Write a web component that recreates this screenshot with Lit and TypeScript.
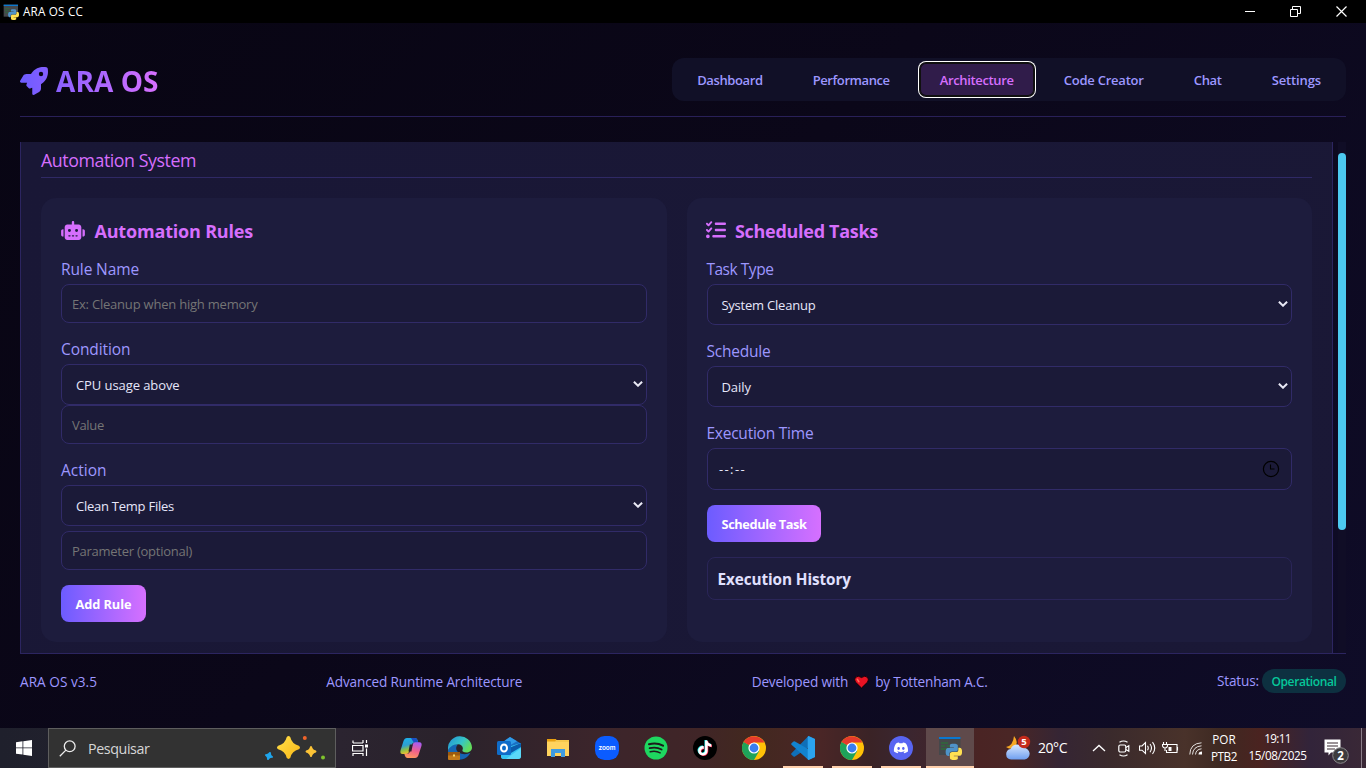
import { LitElement, html, css, svg, nothing } from "lit";
import { customElement, property, state } from "lit/decorators.js";
import { styleMap } from "lit/directives/style-map.js";

/** One line of text whose tracking is adjusted so that it fills `w` pixels. */
@customElement("fit-text")
class FitText extends LitElement {
  static styles = css`
    :host { display: inline-block; white-space: pre; }
  `;
  @property() text = "";
  @property({ type: Number }) w = 0;
  @state() spacing = 0;
  firstUpdated() {
    const el = this.renderRoot.querySelector("span")!;
    const natural = el.getBoundingClientRect().width;
    if (this.w && this.text.length > 1) this.spacing = (this.w - natural) / this.text.length;
  }
  render() {
    return html`<span style=${styleMap({ letterSpacing: this.spacing + "px" })}>${this.text}</span>`;
  }
}

const t = (text: string, w: number) => html`<fit-text .text=${text} .w=${w}></fit-text>`;

const rocket = html`<svg class="rocket" viewBox="0 0 512 512" width="28" height="28">
  <defs><linearGradient id="rg" x1="0" x2="1"><stop offset="0" stop-color="#6c5cff" /><stop offset="1" stop-color="#855eff" /></linearGradient></defs>
  <path fill="url(#rg)" d="M156.6 384.9L125.7 354c-8.5-8.5-11.5-20.8-7.7-32.2c3-8.9 7-20.5 11.8-33.8L24 288c-8.6 0-16.6-4.6-20.9-12.1s-4.2-16.7 .2-24.1l52.5-88.5c13-21.9 36.5-35.3 61.9-35.3l82.3 0c2.4-4 4.8-7.7 7.2-11.3C289.1-4.1 411.1-8.1 483.9 5.3c11.6 2.1 20.6 11.2 22.8 22.8c13.4 72.9 9.3 194.8-111.4 276.7c-3.5 2.4-7.3 4.8-11.3 7.2v82.3c0 25.4-13.4 49-35.3 61.9l-88.5 52.5c-7.4 4.4-16.6 4.5-24.1 .2s-12.1-12.2-12.1-20.9V380.8c-14.1 4.9-26.4 8.9-35.7 11.9c-11.2 3.6-23.4 .5-31.8-7.8zM384 168a40 40 0 1 0 0-80 40 40 0 1 0 0 80z" />
</svg>`;

const robot = html`<svg class="robot" viewBox="0 0 640 512" width="24" height="19"><path fill="#d66efd" d="M320 0c17.700 0 32 14.300 32 32V96H472c39.800 0 72 32.200 72 72V440c0 39.800-32.200 72-72 72H168c-39.800 0-72-32.200-72-72V168c0-39.800 32.200-72 72-72H288V32c0-17.700 14.300-32 32-32zM208 384c-8.800 0-16 7.200-16 16s7.200 16 16 16h32c8.800 0 16-7.200 16-16s-7.200-16-16-16H208zm96 0c-8.800 0-16 7.200-16 16s7.200 16 16 16h32c8.800 0 16-7.200 16-16s-7.200-16-16-16H304zm96 0c-8.800 0-16 7.200-16 16s7.200 16 16 16h32c8.800 0 16-7.200 16-16s-7.200-16-16-16H400zM264 256a40 40 0 1 0 -80 0 40 40 0 1 0 80 0zm152 40a40 40 0 1 0 0-80 40 40 0 1 0 0 80zM48 224H64V416H48c-26.500 0-48-21.500-48-48V272c0-26.500 21.500-48 48-48zm544 0c26.500 0 48 21.500 48 48v96c0 26.500-21.500 48-48 48H576V224h16z" /></svg>`;

const listCheck = html`<svg class="check" viewBox="0 0 512 512" width="20" height="20"><path fill="#d66efd" d="M152.1 38.2c9.9 8.9 10.7 24 1.8 33.9l-72 80c-4.4 4.9-10.6 7.8-17.2 7.9s-12.9-2.4-17.6-7L7 113C-2.3 103.6-2.3 88.4 7 79s24.6-9.4 33.9 0l22.1 22.1 55.1-61.2c8.9-9.900 24-10.700 33.900-1.800zm0 160c9.900 8.900 10.700 24 1.800 33.900l-72 80c-4.400 4.900-10.600 7.800-17.200 7.900s-12.900-2.400-17.600-7L7 273c-9.400-9.400-9.400-24.600 0-33.900s24.600-9.400 33.900 0l22.100 22.100 55.100-61.200c8.900-9.900 24-10.700 33.900-1.800zM224 96c0-17.700 14.300-32 32-32H480c17.700 0 32 14.300 32 32s-14.300 32-32 32H256c-17.700 0-32-14.300-32-32zm0 160c0-17.700 14.300-32 32-32H480c17.700 0 32 14.300 32 32s-14.300 32-32 32H256c-17.700 0-32-14.300-32-32zM160 416c0-17.700 14.300-32 32-32H480c17.700 0 32 14.300 32 32s-14.300 32-32 32H192c-17.700 0-32-14.300-32-32zM48 368a48 48 0 1 1 0 96 48 48 0 1 1 0-96z" /></svg>`;

const PY = "M14.25.18l.9.2.73.26.59.3.45.32.34.34.25.34.16.33.1.3.04.26.02.2-.01.13V8.5l-.05.63-.13.55-.21.46-.26.38-.3.31-.33.25-.35.19-.35.14-.33.1-.3.07-.26.04-.21.02H8.77l-.69.05-.59.14-.5.22-.41.27-.33.32-.27.35-.2.36-.15.37-.1.35-.07.32-.04.27-.02.21v3.06H3.17l-.21-.03-.28-.07-.32-.12-.35-.18-.36-.26-.36-.36-.35-.46-.32-.59-.28-.73-.21-.88-.14-1.05-.05-1.23.06-1.22.16-1.04.24-.87.32-.71.36-.57.4-.44.42-.33.42-.24.4-.16.36-.1.32-.05.24-.01h.16l.06.01h8.16v-.83H6.18l-.01-2.75-.02-.37.05-.34.11-.31.17-.28.25-.26.31-.23.38-.2.44-.18.51-.15.58-.12.64-.1.71-.06.77-.04.84-.02 1.27.05z";

const pythonWindow = (s: number) => html`<svg viewBox="0 0 24 24" width=${s} height=${s}>
  <rect x="1" y="1" width="21.500" height="18" fill="#45484b" /><rect x="1" y="1" width="21.500" height="2" fill="#0a78d0" />
  <path d="M3 7h7M3 10h4M8.500 10h4M3 13h6" stroke="#2f6a3c" stroke-width="1.300" />
  <g transform="translate(7.700 7.700) scale(.68)"><path d=${PY} fill="#4f93c8" /><path d=${PY} fill="#ffe052" transform="rotate(180 12 12)" /></g>
</svg>`;

const chrome = html`<svg viewBox="0 0 24 24" width="24" height="24">
  <circle cx="12" cy="12" r="12" fill="#ffc107" />
  <path d="M12 12L1.600 6A12 12 0 0 0 12 24L17.200 15z" fill="#1ea35a" />
  <path d="M1.600 6L6.800 15L12 12z" fill="#1ea35a" />
  <path d="M1.600 6A12 12 0 0 1 22.400 6.500H12L6.800 9z" fill="#e53b2c" />
  <circle cx="12" cy="12" r="5.600" fill="#fff" /><circle cx="12" cy="12" r="4.400" fill="#3a7df0" />
</svg>`;

const copilot = html`<svg viewBox="0 0 24 24" width="24" height="24">
  <defs>
    <linearGradient id="ca" x1="0" y1="0" x2=".3" y2="1"><stop offset="0" stop-color="#19b4f0" /><stop offset=".5" stop-color="#2f9fd0" /><stop offset=".75" stop-color="#8bc04a" /><stop offset="1" stop-color="#f2c22b" /></linearGradient>
    <linearGradient id="cb" x1=".6" y1="0" x2=".3" y2="1"><stop offset="0" stop-color="#a95cf0" /><stop offset=".5" stop-color="#f0608c" /><stop offset="1" stop-color="#ff9a5c" /></linearGradient>
  </defs>
  <path d="M8 2h8q1.800 0 2.500 2l.8 2.500h-4q-1.800 0-2.400 2L10 16q-.8 2-2.600 2H3.500Q.8 18 1.500 14.500L4.500 5Q5.500 2 8 2z" fill="url(#ca)" />
  <path d="M12 2h4q1.800 0 2.500 2l.8 2.500h-4.600z" fill="#1a4fc4" />
  <path d="M16 22H8.500q-1.800 0-2.500-2l-.7-2.200h3.200q1.800 0 2.400-2l2.800-7.600q.8-2 2.600-2h4.200q2.700 0 2 3.500L19.500 19Q18.500 22 16 22z" fill="url(#cb)" />
  <path d="M10.800 8.500h3L12.400 15.500H9.500z" fill="#2a232c" />
</svg>`;

const edge = html`<svg viewBox="0 0 24 24" width="24" height="24">
  <defs><linearGradient id="ea" x1="0" x2="1" y2=".5"><stop offset="0" stop-color="#2392d8" /><stop offset=".6" stop-color="#35c4c8" /><stop offset="1" stop-color="#62dc5c" /></linearGradient></defs>
  <path d="M0 16C0 10 5 7.500 10 8.500c-2.500 2-2.500 6 .5 8 4 2.300 8.500 2 12 .2-3 5.500-9 8-14.500 6.500C3 22 0 19 0 16z" fill="#1565b4" />
  <path d="M0 13A12 12 0 0 1 24 11.500c0 3.500-3 5-5.500 5-3.500 0-4.500-1.500-4-2.500 1.300-3-1-5.800-4.500-5.800C5 8.200 1 11 0 15z" fill="url(#ea)" />
  <rect y="16" width="12" height="8" rx="1" fill="#c47a1a" /><path d="M0 16h12v3.500H0z" fill="#9c5a10" /><rect x="5" y="18.500" width="2" height="2" fill="#ffd75e" />
</svg>`;

const outlook = html`<svg viewBox="0 0 24 24" width="24" height="24">
  <path d="M4 7L13 1l10 6v8H4z" fill="#1a6fc4" /><path d="M8 4.500L13 1l7 4.200-7 4z" fill="#2f9be8" />
  <path d="M4 22V13l20-6v13q0 3-3 3H7q-3 0-3-2z" fill="#35c3f2" /><path d="M12 12l12-5v4l-10 6z" fill="#0b5bab" /><path d="M9 23l15-11v8q0 3-3 3z" fill="#5ad8f8" />
  <rect y="5" width="14" height="14" rx="1.500" fill="#0f6cc9" /><ellipse cx="7" cy="12" rx="3" ry="3.500" fill="none" stroke="#fff" stroke-width="2" />
</svg>`;

const folder = html`<svg viewBox="0 0 24 24" width="24" height="24">
  <path d="M1 3h9l1 2v3H1z" fill="#e8a010" /><path d="M1 5.500h22V20H1z" fill="#ffd35e" /><path d="M10 4h13v2H9z" fill="#f7c84c" />
  <path d="M5 13h14v8h-4v-4h-6v4H5z" fill="#3f9be0" />
</svg>`;

const zoomIcon = html`<svg viewBox="0 0 24 24" width="24" height="24"><rect width="24" height="24" rx="9.500" fill="#0b5cff" /><text x="12" y="14" text-anchor="middle" font-size="7" font-weight="600" fill="#fff" font-family="Inter, sans-serif" textLength="17" lengthAdjust="spacingAndGlyphs">zoom</text></svg>`;

const spotify = html`<svg viewBox="0 0 24 24" width="24" height="24"><circle cx="12" cy="12" r="11.500" fill="#1ed760" /><g fill="none" stroke="#1d1a1b" stroke-linecap="round"><path d="M5 8.300q7.500-2.200 14 1.400" stroke-width="2.100" /><path d="M5.600 12.200q6.500-1.800 12 1.300" stroke-width="1.800" /><path d="M6.200 15.700q5.500-1.400 10 1.100" stroke-width="1.500" /></g></svg>`;

const TT = "M12.525.02c1.31-.02 2.61-.01 3.91-.02.08 1.53.63 3.09 1.75 4.17 1.12 1.11 2.7 1.62 4.24 1.79v4.03c-1.44-.05-2.89-.35-4.2-.97-.57-.26-1.1-.59-1.62-.93-.01 2.92.01 5.84-.02 8.75-.08 1.4-.54 2.79-1.35 3.94-1.31 1.92-3.58 3.17-5.91 3.21-1.43.08-2.86-.31-4.08-1.03-2.02-1.19-3.44-3.37-3.65-5.71-.02-.5-.03-1-.01-1.49.18-1.9 1.12-3.72 2.58-4.96 1.66-1.44 3.98-2.13 6.15-1.72.02 1.48-.04 2.96-.04 4.44-.99-.32-2.15-.23-3.02.37-.63.41-1.11 1.04-1.36 1.75-.21.51-.15 1.07-.14 1.61.24 1.64 1.82 3.02 3.5 2.87 1.12-.01 2.19-.66 2.77-1.61.19-.33.4-.67.41-1.06.1-1.79.06-3.57.07-5.36.01-4.03-.01-8.05.02-12.07z";
const tiktok = html`<svg viewBox="0 0 24 24" width="24" height="24"><circle cx="12" cy="12" r="12" fill="#000" />
  <g transform="translate(4.200 4.400) scale(.63)"><path d=${TT} fill="#25f4ee" transform="translate(-1 -.8)" /><path d=${TT} fill="#fe2c55" transform="translate(1 .8)" /><path d=${TT} fill="#fff" /></g></svg>`;

const vscode = html`<svg viewBox="0 0 24 24" width="24" height="24">
  <path d="M17.500 0L24 3v4L4 20.500q-.8.500-1.500 0L.5 18.700q-.7-.8 0-1.500z" fill="#0f6fb8" />
  <path d="M17.500 24L24 21v-4L4 5.500q-.8-.5-1.500 0L.5 7.200q-.7.800 0 1.500z" fill="#1283cf" />
  <path d="M17.500 0L24 3v18l-6.500 3q-.8-.2-.8-1.200V1.200q0-1 .8-1.200z" fill="#2ba3ee" />
</svg>`;

const discord = html`<svg viewBox="0 0 24 24" width="24" height="24"><circle cx="12" cy="12" r="12" fill="#5865f2" /><g transform="translate(4.900 4.900) scale(.59)"><path fill="#fff" d="M20.317 4.3698a19.7913 19.7913 0 00-4.8851-1.5152.0741.0741 0 00-.0785.0371c-.211.3753-.4447.8648-.6083 1.2495-1.8447-.2762-3.68-.2762-5.4868 0-.1636-.3933-.4058-.8742-.6177-1.2495a.077.077 0 00-.0785-.037 19.7363 19.7363 0 00-4.8852 1.515.0699.0699 0 00-.0321.0277C.5334 9.0458-.319 13.5799.0992 18.0578a.0824.0824 0 00.0312.0561c2.0528 1.5076 4.0413 2.4228 5.9929 3.0294a.0777.0777 0 00.0842-.0276c.4616-.6304.8731-1.2952 1.226-1.9942a.076.076 0 00-.0416-.1057c-.6528-.2476-1.2743-.5495-1.8722-.8923a.077.077 0 01-.0076-.1277c.1258-.0943.2517-.1923.3718-.2914a.0743.0743 0 01.0776-.0105c3.9278 1.7933 8.18 1.7933 12.0614 0a.0739.0739 0 01.0785.0095c.1202.099.246.1981.3728.2924a.077.077 0 01-.0066.1276 12.2986 12.2986 0 01-1.873.8914.0766.0766 0 00-.0407.1067c.3604.698.7719 1.3628 1.225 1.9932a.076.076 0 00.0842.0286c1.961-.6067 3.9495-1.5219 6.0023-3.0294a.077.077 0 00.0313-.0552c.5004-5.177-.8382-9.6739-3.5485-13.6604a.061.061 0 00-.0312-.0286zM8.02 15.3312c-1.1825 0-2.1569-1.0857-2.1569-2.419 0-1.3332.9555-2.4189 2.157-2.4189 1.2108 0 2.1757 1.0952 2.1568 2.419 0 1.3332-.9555 2.4189-2.1569 2.4189zm7.9748 0c-1.1825 0-2.1569-1.0857-2.1569-2.419 0-1.3332.9554-2.4189 2.1569-2.4189 1.2108 0 2.1757 1.0952 2.1568 2.419 0 1.3332-.946 2.4189-2.1568 2.4189Z" /></g></svg>`;

const star = (cx: number, cy: number, r: number, fill: string, rot = 0) =>
  svg`<path transform="translate(${cx} ${cy}) rotate(${rot}) scale(${r})" fill=${fill} d="M-.16-.9Q0-1.1.16-.9Q.3-.3.9-.16Q1.1 0 .9.16Q.3.3.16.9Q0 1.1-.16.9Q-.3.3-.9.16Q-1.100 0-.9-.16Q-.3-.3-.16-.9z" />`;

const sparkles = html`<svg width="62" height="30" viewBox="0 0 62 30">
  <defs><linearGradient id="sg" x1="0" y1="0" x2="1" y2="1"><stop offset="0" stop-color="#ffe04a" /><stop offset="1" stop-color="#f9b616" /></linearGradient></defs>
  ${star(24.500, 14.500, 11.500, "url(#sg)")} ${star(47, 18.500, 5.500, "#fcc436")} ${star(5, 23, 4.300, "#1fa5ec", 18)}
  <circle cx="40.800" cy="5" r="2" fill="#f0642a" /><circle cx="59" cy="24.500" r="2" fill="#7fc42c" />
</svg>`;

const weather = html`<svg width="26" height="26" viewBox="0 0 26 26">
  <defs><linearGradient id="wg" x1="0" y1="0" x2="0" y2="1"><stop offset="0" stop-color="#d9e8ff" /><stop offset="1" stop-color="#6f9ff0" /></linearGradient></defs>
  <path d="M9 1q5 6 1 11-4 3.500-9 0q7-1 8-11z" fill="#f7a823" />
  <path d="M6 24.500a5.300 5.300 0 0 1-.4-10.500 7 7 0 0 1 12.600-1 5.800 5.800 0 0 1 1.500 11.500z" fill="url(#wg)" />
  <circle cx="19" cy="7" r="6.200" fill="#c42b1c" /><text x="19" y="10.400" font-size="9.500" font-weight="700" text-anchor="middle" fill="#fff" font-family="Open Sans, sans-serif">5</text>
</svg>`;

const arrow = html`<svg class="arrow" width="10" height="6" viewBox="0 0 10 6"><path d="M.9.7L5 4.700 9.100.7" fill="none" stroke="#e8e8f4" stroke-width="2" /></svg>`;

@customElement("app-root")
class AppRoot extends LitElement {
  static styles = css`
    :host { display: block; width: 1366px; height: 768px; overflow: hidden; font-family: "Open Sans", "Noto Sans", sans-serif; }
    * { box-sizing: border-box; }
    svg { display: block; flex: none; }
    .screen { display: flex; flex-direction: column; height: 768px; background: #000; }
    .titlebar { height: 23px; display: flex; align-items: center; background: #000; color: #fff; font-size: 11.700px; padding-left: 3px; flex: none; }
    .titlebar fit-text { margin: -1px 0 0 4px; flex: 1; }
    .winbtns { display: flex; align-items: center; gap: 35px; padding-right: 19px; }
    .app { height: 705px; flex: none; padding: 35px 20px 0; background: linear-gradient(135deg, #080513 0%, #0b0719 45%, #0f0c28 100%); color: #e0e0ff; }
    header { height: 59px; display: flex; justify-content: space-between; align-items: flex-start; border-bottom: 1px solid #292058; }
    .logo { display: flex; align-items: center; height: 45px; }
    .logo .name { margin-left: 8px; font-size: 28px; font-weight: 700; line-height: 40px; background: linear-gradient(90deg, #8a60ff, #d870ff); -webkit-background-clip: text; background-clip: text; color: transparent; }
    nav { height: 43px; display: flex; gap: 10px; padding: 5px; border-radius: 12px; background: #111027; }
    .tab { height: 33px; padding: 0 20px; display: flex; align-items: center; font-size: 13px; font-weight: 600; color: #9d97ff; border-radius: 8px; }
    .tab.on { padding: 0 20px 0 20px; color: #d66efd; background: #301c4a; border-radius: 6px; box-shadow: inset 0 0 0 1px #101010, 0 0 0 1px #101010, 0 0 0 2px #fff; }
    main { margin-top: 25px; height: 512px; display: flex; justify-content: space-between; border-bottom: 1px solid #2c2560; }
    .panel { width: 1313px; border: 1px solid #2c2560; border-width: 0 1px; padding: 0 20px; background: linear-gradient(135deg, #191736, #1a1836); }
    .panel h2 { margin: 0 0 20px; height: 36px; line-height: 37px; font-size: 17.800px; font-weight: 400; color: #d66efd; border-bottom: 1px solid #2f2965; }
    .cards { display: grid; grid-template-columns: 626px 625px; gap: 20px; }
    .card { height: 444px; padding: 20px; border-radius: 15px; background: #1d1c3d; }
    .card h3 { margin: 0 0 15px; height: 26px; display: flex; align-items: center; font-size: 18px; font-weight: 700; color: #d66efd; }
    .card h3 fit-text { margin-left: 9.500px; }
    .card h3 .robot { margin-top: -2px; }
    .card h3 .check { margin: -3px 0 0 -1px; }
    .card h3 .check + fit-text { margin-left: 9px; }
    label { display: block; height: 21px; line-height: 21px; margin-bottom: 4px; font-size: 15.500px; color: #9d97ff; }
    .box { display: flex; align-items: center; border: 1px solid #312b68; border-radius: 8px; background: #1b1a38; font-size: 13px; padding-left: 10px; height: 39px; color: #757575; }
    .box.sel { height: 41px; padding-left: 14px; padding-right: 3px; justify-content: space-between; color: #e6e6fa; }
    .box.sel .arrow { margin-top: -1px; }
    .box.time { height: 42px; justify-content: space-between; padding-left: 11px; padding-right: 11px; color: #e6e6fa; }
    .tasks label fit-text, .tasks .sel fit-text { margin-left: -.6px; }
    .field { margin-bottom: 16px; }
    .field.last { margin-bottom: 15px; }
    .gap { margin-top: 5px; }
    .btn { display: flex; align-items: center; justify-content: center; height: 37px; border-radius: 8px; background: linear-gradient(90deg, #6c5cff, #d670ff); color: #fff; font-weight: 700; font-size: 12.800px; padding-top: 1px; }
    .btn.add { width: 85px; }
    .btn.sched { width: 114px; }
    .history { margin-top: 15px; height: 43px; border: 1px solid #2a2558; border-radius: 8px; padding: 1px 0 0 9.500px; display: flex; align-items: center; font-size: 15.300px; font-weight: 700; color: #e0e0ff; }
    .scroll { width: 8px; padding-top: 11px; background: #100d26; }
    .thumb { height: 377px; border-radius: 4px; background: #4cc9f0; }
    footer { display: flex; justify-content: space-between; align-items: center; height: 55px; font-size: 13.600px; color: #9d97ff; }
    .made, .status { display: flex; align-items: center; }
    .made svg { margin: 0 6px; }
    .status { margin-top: -2px; }
    .pill { margin-left: 3px; width: 84px; height: 24px; border-radius: 12px; display: flex; align-items: center; justify-content: center; background: #0d3040; color: #06c79a; font-weight: 600; font-size: 12px; padding-top: 1px; }
    .taskbar { height: 40px; flex: none; display: flex; color: #fff; background: linear-gradient(90deg, #1f202c 0, #2b2430 340px, #2a222b 450px, #3c252b 600px, #402527 700px, #42281f 750px, #4a2626 820px, #3a2326 870px, #3a2630 905px, #4a2424 980px, #4a2625 1010px, #352534 1060px, #3a2a2c 1110px, #49322a 1185px, #3e2922 1220px, #4a2320 1260px, #32243a 1310px, #3a2836 1366px); }
    .start, .view, .item { display: flex; align-items: center; justify-content: center; height: 40px; flex: none; }
    .start { width: 48px; }
    .search { width: 288px; height: 40px; flex: none; display: flex; align-items: center; background: #323232; border: 1px solid #5e5e5e; font-size: 14.300px; color: #d6d6d6; padding-left: 10px; }
    .search .q { flex: 1; margin-left: 12px; }
    .search .sp { margin-right: 9px; }
    .view { width: 50px; padding-right: 2px; }
    .item { width: 49px; border-left: 4.500px solid transparent; border-right: 4.500px solid transparent; }
    .item.run { border-bottom: 2px solid #ffd0ac; padding-top: 2px; border-left: 0; border-right: 0; margin: 0 4px 0 5px; width: 40px; }
    .item.on { width: 48px; margin: 0 0 0 1px; background: #5f4a4b; }
    .w { margin: 7px 0 0 31px; }
    .temp { margin: 10px 0 0 7px; width: 30px; font-size: 14px; line-height: 20px; }
    .tray { display: flex; align-items: center; height: 40px; margin-left: 24px; }
    .tray .a { margin-left: 12px; } .tray .b { margin-left: 9px; } .tray .c { margin-left: 6px; } .tray .d { margin-left: 10px; }
    .two { display: flex; flex-direction: column; align-items: center; font-size: 11.700px; line-height: 17px; margin-left: 8px; height: 36px; padding-top: 1px; }
    .two.clock { margin-left: 11.500px; }
    .two.clock fit-text:first-child { margin-top: -1px; }
    .note { margin: 6px 0 0 17px; }
    .peek { margin-left: 12px; width: 1px; height: 40px; background: #8a7d88; }
  `;

  private select(text: string, w: number) {
    return html`<div class="box sel">${t(text, w)}${arrow}</div>`;
  }

  render() {
    const tabs: [string, number][] = [["Dashboard", 65.500], ["Performance", 77], ["Architecture", 74], ["Code Creator", 80], ["Chat", 28], ["Settings", 49.300]];
    const apps = [
      { i: copilot }, { i: edge }, { i: outlook }, { i: folder }, { i: zoomIcon }, { i: spotify }, { i: tiktok }, { i: chrome },
      { i: vscode, run: true }, { i: chrome, run: true }, { i: discord, run: true }, { i: pythonWindow(24), run: true, on: true },
    ];
    return html`<div class="screen">
      <div class="titlebar">${pythonWindow(16)}${t("ARA OS CC", 60)}
        <div class="winbtns">
          <svg width="10" height="11" viewBox="0 0 10 11"><path d="M0 5.500h10" stroke="#fff" /></svg>
          <svg width="11" height="11" viewBox="0 0 11 11" fill="none" stroke="#fff"><path d="M.5 3.500h7v7h-7zM2.500 3V.5h8v7H8" /></svg>
          <svg width="11" height="11" viewBox="0 0 11 11"><path d="M.5.5l10 10M10.500.5l-10 10" stroke="#fff" stroke-width="1.200" /></svg>
        </div>
      </div>
      <div class="app">
        <header>
          <div class="logo">${rocket}<div class="name">${t("ARA OS", 102.500)}</div></div>
          <nav>${tabs.map(([n, w]) => html`<div class="tab ${n === "Architecture" ? "on" : ""}">${t(n, w)}</div>`)}</nav>
        </header>
        <main>
          <section class="panel">
            <h2>${t("Automation System", 155)}</h2>
            <div class="cards">
              <div class="card">
                <h3>${robot}${t("Automation Rules", 158.500)}</h3>
                <div class="field"><label>${t("Rule Name", 78)}</label><div class="box">${t("Ex: Cleanup when high memory", 185.500)}</div></div>
                <div class="field"><label>${t("Condition", 69.500)}</label>${this.select("CPU usage above", 103.500)}<div class="box">${t("Value", 32)}</div></div>
                <div class="field last"><label>${t("Action", 45.500)}</label>${this.select("Clean Temp Files", 98)}<div class="box gap">${t("Parameter (optional)", 120)}</div></div>
                <div class="btn add">${t("Add Rule", 56)}</div>
              </div>
              <div class="card tasks">
                <h3>${listCheck}${t("Scheduled Tasks", 143)}</h3>
                <div class="field"><label>${t("Task Type", 67)}</label>${this.select("System Cleanup", 94)}</div>
                <div class="field"><label>${t("Schedule", 64)}</label>${this.select("Daily", 29.500)}</div>
                <div class="field last"><label>${t("Execution Time", 107)}</label>
                  <div class="box time">${t("--:--", 27)}
                    <svg width="18" height="18" viewBox="0 0 18 18" fill="none" stroke="#000" stroke-width="1.200"><circle cx="9" cy="9" r="7.600" /><path d="M8.500 4.500v4.500h4" stroke-width="1.100" /></svg>
                  </div></div>
                <div class="btn sched">${t("Schedule Task", 85)}</div>
                <div class="history">${t("Execution History", 133.500)}</div>
              </div>
            </div>
          </section>
          <div class="scroll"><div class="thumb"></div></div>
        </main>
        <footer>
          ${t("ARA OS v3.5", 77)}
          ${t("Advanced Runtime Architecture", 196)}
          <div class="made">${t("Developed with", 96.500)}
            <svg width="15" height="14" viewBox="0 0 15 14"><path d="M7.500 13L1.400 7Q0 4.800 1.300 2.600 4-.3 7.500 2.600 11-.3 13.700 2.600 15 4.800 13.600 7z" fill="#e81224" stroke="#000" stroke-width=".8" /><path d="M3.400 4.300l1.400 2.400" stroke="#ff6a5a" stroke-width="1.600" stroke-linecap="round" /></svg>
            ${t("by Tottenham A.C.", 112.500)}</div>
          <div class="status">${t("Status:", 42)}<div class="pill">${t("Operational", 65)}</div></div>
        </footer>
      </div>
      <div class="taskbar">
        <div class="start"><svg width="16" height="16" viewBox="0 0 16 16" fill="#fff"><path d="M0 2.200L6.500 1.300V7.500H0zM7.300 1.200L16 0V7.500H7.300zM0 8.300H6.500V14.600L0 13.700zM7.300 8.300H16V16L7.300 14.700z" /></svg></div>
        <div class="search"><svg width="17" height="17" viewBox="0 0 17 17" fill="none" stroke="#ececec" stroke-width="1.300"><circle cx="10.700" cy="6.300" r="5.400" /><path d="M6.900 10.100L.8 16.200" /></svg>
          <span class="q">${t("Pesquisar", 61.500)}</span><span class="sp">${sparkles}</span></div>
        <div class="view"><svg width="17" height="16" viewBox="0 0 17 16" fill="none" stroke="#fff"><path d="M1 .5V3M1 3h10M11 0v3M.5 5.500h10.500v5.500H.5zM1 16v-2.500h10V16M14.500 0v3M14.500 8.500V16" stroke-width="1.200" /><path d="M13 4.500h3v3h-3z" fill="#fff" stroke="none" /></svg></div>
        ${apps.map((a) => html`<div class="item ${a.run ? "run" : ""} ${a.on ? "on" : ""}">${a.i ?? nothing}</div>`)}
        <div class="w">${weather}</div><div class="temp">${t("20°C", 29)}</div>
        <div class="tray">
          <svg width="14" height="8" viewBox="0 0 14 8"><path d="M1 7l6-5.500L13 7" fill="none" stroke="#fff" stroke-width="1.300" /></svg>
          <svg class="a" width="12" height="17" viewBox="0 0 12 17" fill="none" stroke="#fff" stroke-width="1.200"><rect x=".8" y="5" width="7" height="7" rx="1.500" /><path d="M7.800 7.500l3-1.700v5.400l-3-1.700M1.500 2.300Q5.500-.3 9.500 2.300M1.500 14.700q4 2.600 8 0" /></svg>
          <svg class="b" width="17" height="14" viewBox="0 0 17 14" fill="none" stroke="#fff" stroke-width="1.100"><path d="M.5 5h2.500L6.500 1.500v11L3 9.200H.5zM8.500 4.800q1.500 2.200 0 4.500M11 3q3 4 0 8.200M13.500 1.200q4.500 5.800 0 11.800" /></svg>
          <svg class="c" width="17" height="13" viewBox="0 0 17 13" fill="none" stroke="#fff" stroke-width="1.100"><path d="M6 2.500h9v8H4.500V8M15.500 5v3.500M1.500 0v2.500M4.500 0v2.500M.5 2.500h5V4q-.5 2-2.500 2T.5 4zM3 6v3" /><path d="M6.500 5h3v4h-3z" fill="#fff" stroke="none" /></svg>
          <svg class="d" width="14" height="13" viewBox="0 0 14 13" fill="none" stroke="#fff"><path d="M.8 12.500Q1 1.500 12.500.8M3.500 12.500Q4 4.500 12.500 3.800M6.500 12.500Q7 7.300 12.500 6.800" opacity=".85" /><path d="M9.500 12.500q0-2.800 3.500-3V12.500z" fill="#fff" stroke="none" /></svg>
          <div class="two">${t("POR", 23.500)}${t("PTB2", 26)}</div>
          <div class="two clock">${t("19:11", 26.500)}${t("15/08/2025", 58)}</div>
          <svg class="note" width="25" height="26" viewBox="0 0 25 26"><path d="M.5 1.500h16v13H7l-2.500 3v-3h-4z" fill="#fff" /><path d="M3 5h11M3 8h11M3 11h8" stroke="#3a2a33" stroke-width="1.100" /><circle cx="16.500" cy="17.500" r="7.800" fill="#3d3b3e" stroke="#8a888b" /><text x="16.500" y="21.700" font-size="11.500" font-weight="700" text-anchor="middle" fill="#fff" font-family="Open Sans, sans-serif">2</text></svg>
          <div class="peek"></div>
        </div>
      </div>
    </div>`;
  }
}
